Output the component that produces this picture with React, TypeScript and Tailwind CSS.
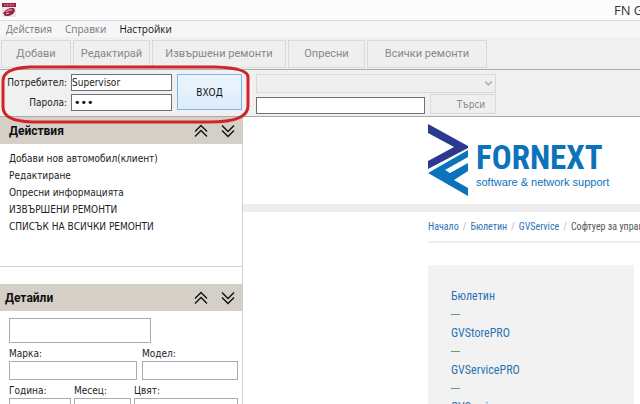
import type { ReactNode } from "react";
import { ChevronDown } from "lucide-react";

const tools = [
  { label: "Добави", width: "w-[70px]" },
  { label: "Редактирай", width: "w-[77px]" },
  { label: "Извършени ремонти", width: "w-[134px]" },
  { label: "Опресни", width: "w-[77px]" },
  { label: "Всички ремонти", width: "w-[120px]" },
];

const actions = [
  "Добави нов автомобил(клиент)",
  "Редактиране",
  "Опресни информацията",
  "ИЗВЪРШЕНИ РЕМОНТИ",
  "СПИСЪК НА ВСИЧКИ РЕМОНТИ",
];

const products = ["Бюлетин", "GVStorePRO", "GVServicePRO", "GVService"];

function Chevrons({ down = false }: { down?: boolean }) {
  return (
    <svg
      viewBox="0 0 14 14"
      className={`h-3.5 w-3.5 ${down ? "rotate-180" : ""}`}
      fill="none"
      stroke="#111"
      strokeWidth="1.4"
    >
      <path d="M1 7.5 7 1.5l6 6M1 12.5l6-6 6 6" />
    </svg>
  );
}

function PanelHeader({ title, className }: { title: string; className: string }) {
  return (
    <div
      className={`flex h-[27px] items-center justify-between bg-[#d4d0c8] pr-[7px] ${className}`}
    >
      <h2 className="font-['Roboto',sans-serif] text-[12px] font-bold leading-5 text-[#111]">
        {title}
      </h2>
      <div className="flex gap-[13px]">
        <button aria-label="Сгъни">
          <Chevrons />
        </button>
        <button aria-label="Разгъни">
          <Chevrons down />
        </button>
      </div>
    </div>
  );
}

function Field({ label, className }: { label: string; className: string }) {
  return (
    <label className={`flex flex-col ${className}`}>
      <span className="leading-[14px]">{label}</span>
      <input className="h-[19px] w-full border border-[#a5acb2] bg-white px-1" />
    </label>
  );
}

function Logo() {
  return (
    <div className="flex">
      <svg viewBox="0 0 40 72" className="h-[72px] w-10">
        <path d="M0 0 40 22v2L0 45v-8l26-14L0 9Z" fill="#2b3990" />
        <path
          d="M40 26 0 49l40 23v-8L26 56l14-9v-8L22 49l-5-3 23-13Z"
          fill="#0b72bc"
        />
      </svg>
      <div className="ml-2 mt-4 flex flex-col text-[#0b72bc]">
        <span className="font-['Roboto_Condensed','Roboto',sans-serif] text-[33px] font-bold leading-9">
          FORNEXT
        </span>
        <span className="whitespace-nowrap font-['Liberation_Sans',sans-serif] text-[11px] leading-3">
          software &amp; network support
        </span>
      </div>
    </div>
  );
}

function Crumb({ children }: { children: ReactNode }) {
  return (
    <>
      <a href="#" className="text-[#2a74b5]">
        {children}
      </a>
      <span className="text-[#bbb]">/</span>
    </>
  );
}

export default function App() {
  return (
    <div className="flex h-screen flex-col overflow-hidden bg-white font-['DejaVu_Sans_Condensed','DejaVu_Sans',sans-serif] text-[10px] text-[#222]">
      <header className="flex h-[21px] shrink-0 items-center justify-between border-b border-[#ddd] bg-[#fcfcfc] pl-0.5">
        <svg viewBox="0 0 14 14" className="h-3.5 w-3.5">
          <path d="M0 0h14v14H0Z" fill="#f0e4e6" />
          <path d="M0 0h14v4H0Z" fill="#a51c3c" />
          <path d="M2 2h10" stroke="#e6b8c2" strokeDasharray="1 .5" />
          <path d="m1 10 3-3 4-2h4l1 3-2 3-4 2H3Z" fill="#912b42" />
          <path d="m4 9 3-2h3M4 11l3-1" stroke="#e8cbd1" fill="none" />
        </svg>
        <h1 className="w-[26px] overflow-hidden whitespace-nowrap font-['Open_Sans',sans-serif] text-[13px] leading-5 text-[#333]">
          FN GVService
        </h1>
      </header>

      <nav className="flex h-4 shrink-0 items-center gap-[13px] bg-[#f5f6f7] pl-1.5 font-['Open_Sans',sans-serif] text-[10px] leading-4 text-[#777]">
        <button>Действия</button>
        <button>Справки</button>
        <button className="text-[#111]">Настройки</button>
      </nav>

      <div className="flex h-[33px] shrink-0 gap-0.5 border-b border-[#aaa] bg-[#f0f0f0] pl-px pt-[3px] font-['Roboto',sans-serif] text-[11px] text-[#888]">
        {tools.map((tool) => (
          <button
            key={tool.label}
            className={`h-7 shrink-0 whitespace-nowrap border border-[#d9d9d9] bg-[#efefef] ${tool.width}`}
          >
            {tool.label}
          </button>
        ))}
      </div>

      <div className="relative flex h-[47px] shrink-0 border-b border-[#aaa] bg-[#f0f0f0] pt-1">
        <form className="flex">
          <div className="flex w-[172px] flex-col gap-[3px]">
            <label className="flex h-[17px] items-center justify-end gap-1">
              Потребител:
              <input
                defaultValue="Supervisor"
                className="h-[17px] w-[101px] border border-[#707070] bg-white"
              />
            </label>
            <label className="flex h-[17px] items-center justify-end gap-1">
              Парола:
              <input
                type="password"
                defaultValue="123"
                className="h-[17px] w-[101px] border border-[#707070] bg-white px-0.5 font-['DejaVu_Sans',sans-serif] text-[11px] text-black"
              />
            </label>
          </div>
          <button
            type="button"
            className="ml-[5px] h-9 w-[65px] border border-[#7eb4ea] bg-linear-to-b from-[#ecf4fc] to-[#dcecfc] text-[#111]"
          >
            ВХОД
          </button>
        </form>
        <div className="ml-3.5 flex flex-col">
          <div className="relative">
            <select
              disabled
              aria-label="Критерий"
              className="block h-[19px] w-[240px] appearance-none border border-[#d9d9d9] bg-[#efefef]"
            />
            <ChevronDown
              size={11}
              strokeWidth={4}
              className="pointer-events-none absolute right-[2px] top-1 text-[#b5b5b5]"
            />
          </div>
          <div className="flex gap-[5px]">
            <input
              aria-label="Търсене"
              className="mt-1 h-[17px] w-[169px] border border-[#707070] bg-white px-1"
            />
            <button className="mt-px h-5 w-[66px] border border-[#d9d9d9] bg-[#efefef] pl-4 text-[#888]">
              Търси
            </button>
          </div>
        </div>
        <svg
          viewBox="0 0 250 60"
          className="pointer-events-none absolute -top-1.5 left-0 z-10 h-[60px] w-[250px]"
          fill="none"
          stroke="#d2232a"
          strokeWidth="3"
        >
          <path d="M30 3H215Q248 4 248 13V42Q248 58 210 58H32Q3 57 3 43V17Q3 4 30 3Z" />
        </svg>
      </div>

      <main className="flex min-h-0 grow">
        <aside className="w-[243px] shrink-0 border-r border-[#d4d0c8]">
          <PanelHeader title="Действия" className="pl-[9px]" />
          <ul className="flex h-[123px] flex-col border-b border-[#d4d0c8] pl-[9px] pt-1.5">
            {actions.map((action) => (
              <li key={action} className="leading-[17px]">
                <a href="#">{action}</a>
              </li>
            ))}
          </ul>
          <PanelHeader title="Детайли" className="mt-[17px] pl-[5px]" />
          <form className="flex flex-col pl-[9px] pr-1 pt-[7px]">
            <input
              aria-label="Клиент"
              className="mb-1 h-[25px] w-[142px] border border-[#a5acb2] bg-white px-1"
            />
            <div className="mb-1 flex gap-[5px]">
              <Field label="Марка:" className="w-32" />
              <Field label="Модел:" className="grow basis-0" />
            </div>
            <div className="flex gap-[3px]">
              <Field label="Година:" className="w-[62px]" />
              <Field label="Месец:" className="w-[57px]" />
              <Field label="Цвят:" className="grow basis-0" />
            </div>
          </form>
        </aside>

        <section className="min-w-0 grow">
          <div className="h-[95px] border-b-8 border-[#ededed] pl-[185px] pt-[7px]">
            <Logo />
          </div>
          <div className="pl-[185px] font-['Roboto_Condensed','Roboto',sans-serif]">
            <nav className="flex h-[31px] items-center gap-1 whitespace-nowrap border-b-2 border-[#eee] text-[10px] text-[#555]">
              <Crumb>Начало</Crumb>
              <Crumb>Бюлетин</Crumb>
              <Crumb>GVService</Crumb>
              <span>Софтуер за управление</span>
            </nav>
            <ul className="mr-1.5 mt-[22px] h-[200px] bg-[#f2f2f2] pl-[23px] pt-[21px] text-[12px] leading-5 text-[#2a74b5]">
              {products.map((product) => (
                <li key={product} className="flex h-[37px] flex-col">
                  <a href="#">{product}</a>
                  <span className="mt-2 h-px w-[9px] bg-[#5aa85a]" />
                </li>
              ))}
            </ul>
          </div>
        </section>
      </main>
    </div>
  );
}
